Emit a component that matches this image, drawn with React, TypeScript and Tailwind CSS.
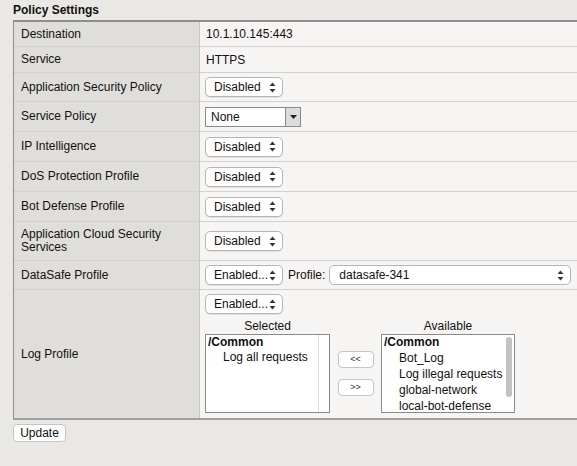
import React from "react";

const Arrows = () => (
  <svg width="7" height="11" viewBox="0 0 7 11" className="shrink-0">
    <path d="M3.5 0.5 L6.5 4 L0.5 4 Z" fill="#333" />
    <path d="M3.5 10.5 L6.5 7 L0.5 7 Z" fill="#333" />
  </svg>
);

const Sel = ({ label, w = "w-[78px]" }: { label: string; w?: string }) => (
  <div
    className={`${w} h-[20px] flex items-center justify-between pl-[8px] pr-[6px] bg-white border border-[#b5b5b5] rounded-[5px] shadow-[0_1px_0_rgba(0,0,0,0.08)] text-[12px] text-[#111]`}
  >
    <span>{label}</span>
    <Arrows />
  </div>
);

const Row = ({
  label,
  h,
  children,
  last,
}: {
  label: React.ReactNode;
  h: string;
  children: React.ReactNode;
  last?: boolean;
}) => (
  <div className={`flex ${h} ${last ? "" : "border-b border-[#d2d1ce]"}`}>
    <div className="w-[186px] shrink-0 bg-[#dfdedb] border-r border-[#c9c8c5] flex items-center pl-[7px] leading-[13px]">
      {label}
    </div>
    <div className="flex-1 bg-[#f6f5f3] flex items-center pl-[5px]">{children}</div>
  </div>
);

export default function App() {
  return (
    <div
      className="w-[577px] h-[466px] bg-[#e9e8e4] text-[12px] text-[#111] overflow-hidden"
      style={{ fontFamily: '"Liberation Sans", Arial, Helvetica, sans-serif' }}
    >
      <div className="pl-[13px] pt-[3px] h-[20px] font-bold text-[12px] leading-[14px]">Policy Settings</div>
      <div className="ml-[13px] border-t-2 border-l border-[#8e8e8e] border-b-2 border-b-[#a0a0a0]">
        <Row label="Destination" h="h-[25px]">
          <span className="pl-[1px]">10.1.10.145:443</span>
        </Row>
        <Row label="Service" h="h-[26px]">
          <span className="pl-[1px]">HTTPS</span>
        </Row>
        <Row label="Application Security Policy" h="h-[29px]">
          <Sel label="Disabled" />
        </Row>
        <Row label="Service Policy" h="h-[30px]">
          <div className="w-[96px] h-[20px] flex bg-white border border-[#8a8a8a]">
            <div className="flex-1 flex items-center pl-[5px]">None</div>
            <div className="w-[15px] border-l border-[#8a8a8a] bg-[#dcdcdc] flex items-center justify-center">
              <svg width="7" height="4" viewBox="0 0 7 4">
                <path d="M0 0 L7 0 L3.5 4 Z" fill="#222" />
              </svg>
            </div>
          </div>
        </Row>
        <Row label="IP Intelligence" h="h-[30px]">
          <Sel label="Disabled" />
        </Row>
        <Row label="DoS Protection Profile" h="h-[30px]">
          <Sel label="Disabled" />
        </Row>
        <Row label="Bot Defense Profile" h="h-[30px]">
          <Sel label="Disabled" />
        </Row>
        <Row
          label={
            <span>
              Application Cloud Security
              <br />
              Services
            </span>
          }
          h="h-[39px]"
        >
          <Sel label="Disabled" />
        </Row>
        <Row label="DataSafe Profile" h="h-[29px]">
          <Sel label="Enabled..." />
          <span className="ml-[5px] mr-[4px]">Profile:</span>
          <div className="w-[242px] h-[20px] flex items-center justify-between pl-[9px] pr-[6px] bg-white border border-[#b5b5b5] rounded-[5px]">
            <span>datasafe-341</span>
            <Arrows />
          </div>
        </Row>
        <Row label="Log Profile" h="h-[128px]" last>
          <div className="flex flex-col self-stretch pt-[4px]">
            <Sel label="Enabled..." />
            <div className="flex mt-[5px]">
              <div className="flex flex-col w-[125px]">
                <div className="text-center h-[14px] leading-[14px]">Selected</div>
                <div className="mt-[1px] h-[79px] bg-white border border-[#8a8a8a] flex">
                  <div className="flex-1 pl-[2px] leading-[15px]">
                    <div className="font-bold">/Common</div>
                    <div className="pl-[15px]">Log all requests</div>
                  </div>
                  <div className="w-[11px] border-l border-[#dcdcdc]" />
                </div>
              </div>
              <div className="w-[51px] flex flex-col items-center pt-[32px] gap-[11px]">
                <div className="w-[36px] h-[17px] bg-white border border-[#c4c4c4] rounded-[4px] flex items-center justify-center text-[9px] text-[#333]">
                  &lt;&lt;
                </div>
                <div className="w-[36px] h-[17px] bg-white border border-[#c4c4c4] rounded-[4px] flex items-center justify-center text-[9px] text-[#333]">
                  &gt;&gt;
                </div>
              </div>
              <div className="flex flex-col w-[134px]">
                <div className="text-center h-[14px] leading-[14px]">Available</div>
                <div className="mt-[1px] h-[79px] bg-white border border-[#8a8a8a] flex overflow-hidden">
                  <div className="flex-1 pl-[2px] leading-[16px] whitespace-nowrap -mt-[1px]">
                    <div className="font-bold">/Common</div>
                    <div className="pl-[15px]">Bot_Log</div>
                    <div className="pl-[15px]">Log illegal requests</div>
                    <div className="pl-[15px]">global-network</div>
                    <div className="pl-[15px]">local-bot-defense</div>
                  </div>
                  <div className="w-[11px] flex justify-center pt-[2px]">
                    <div className="w-[6px] h-[60px] rounded-full bg-[#c2c2c2]" />
                  </div>
                </div>
              </div>
            </div>
          </div>
        </Row>
      </div>
      <div className="pl-[13px] pt-[4px]">
        <div className="w-[53px] h-[18px] bg-white border border-[#c4c4c4] rounded-[4px] flex items-center justify-center text-[12px]">
          Update
        </div>
      </div>
    </div>
  );
}
